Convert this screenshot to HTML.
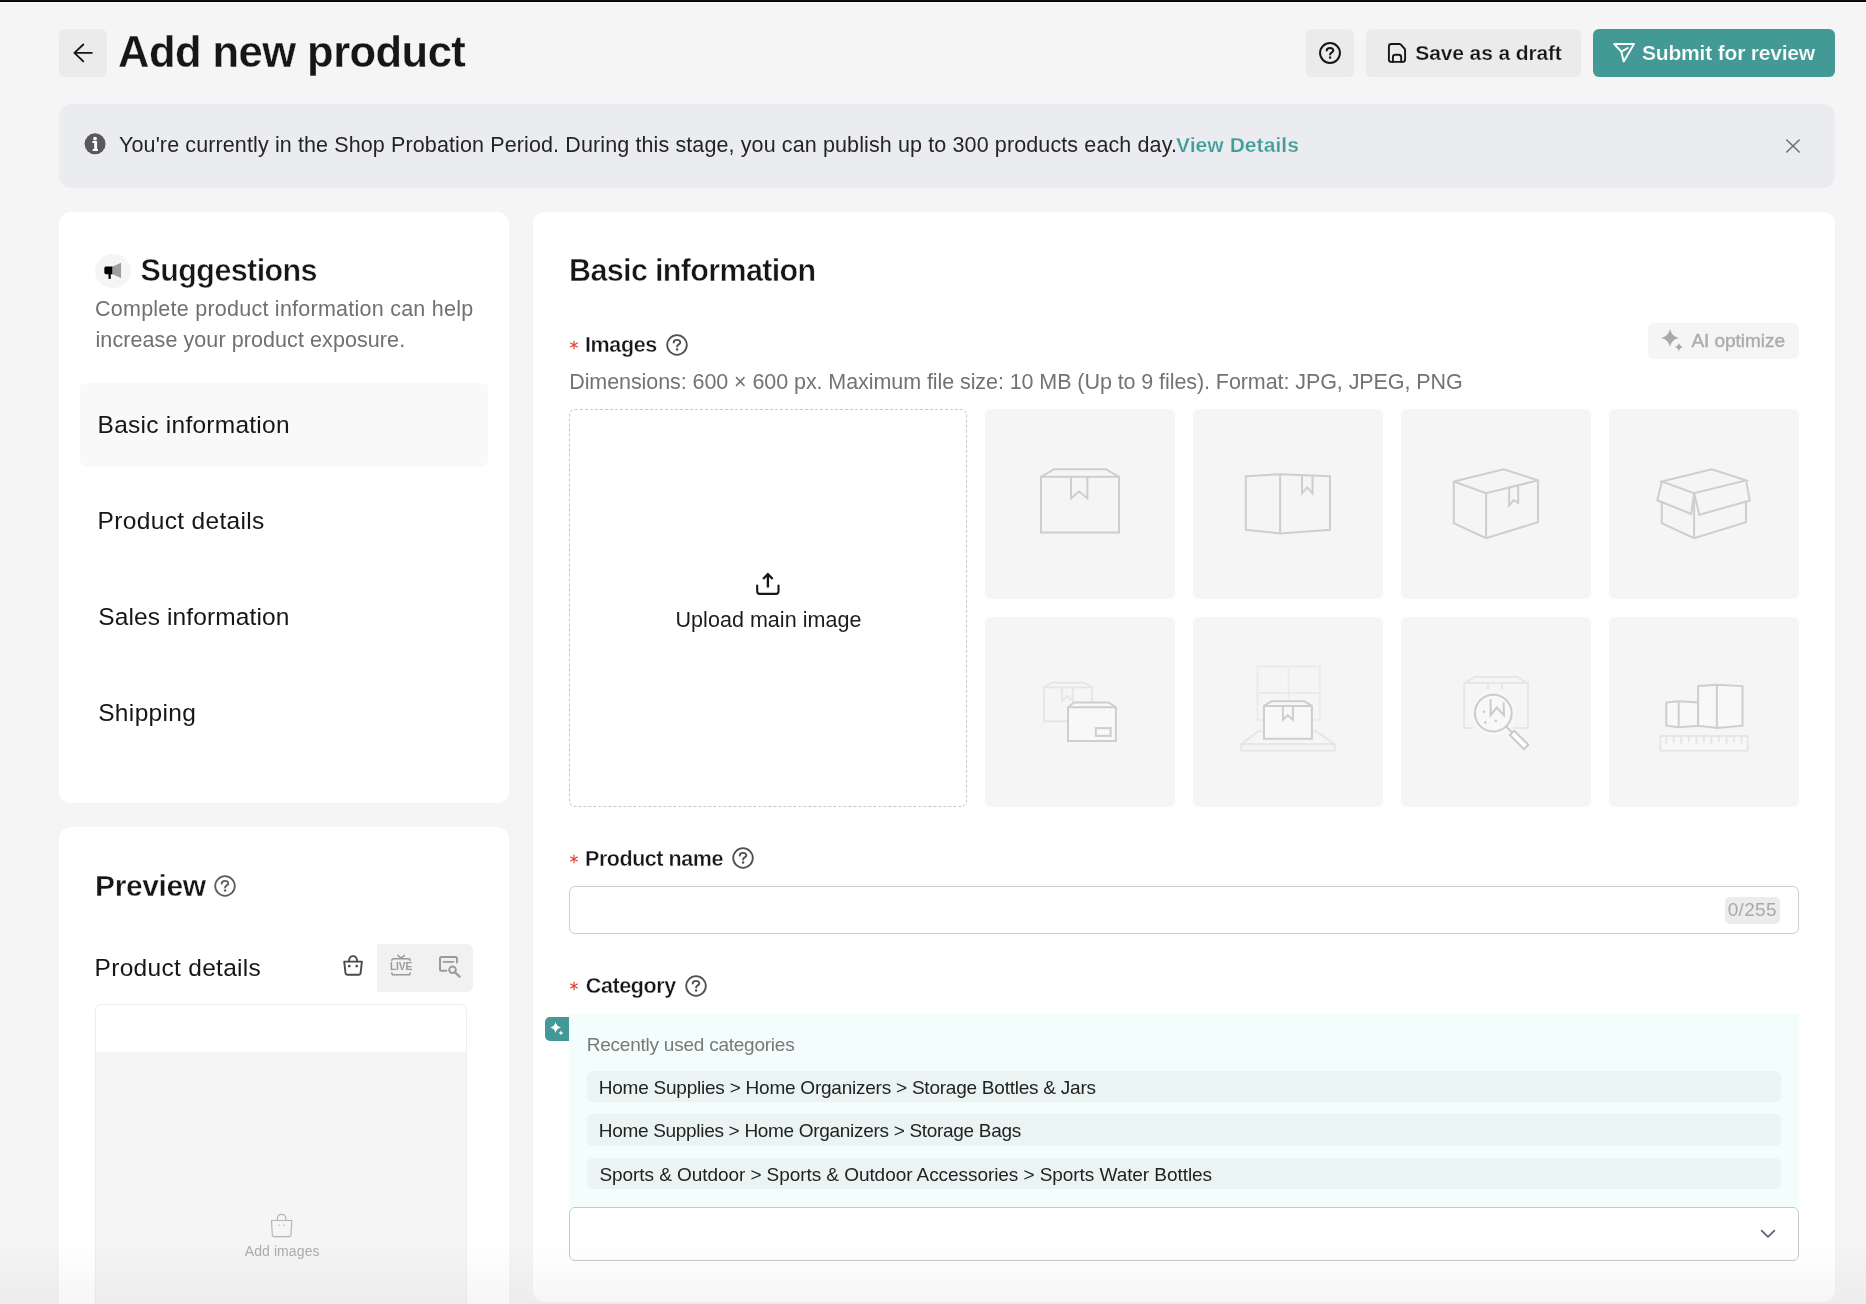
<!DOCTYPE html>
<html lang="en"><head><meta charset="utf-8"><title>Add new product</title>
<style>
html,body{margin:0;padding:0;width:1866px;height:1304px;overflow:hidden;}
body{width:1866px;height:1304px;overflow:hidden;background:#f5f5f5;position:relative;font-family:"Liberation Sans", sans-serif;}
.b{position:absolute;}
.t{position:absolute;white-space:nowrap;font-family:"Liberation Sans", sans-serif;}
.i{position:absolute;overflow:visible;}
#w{position:absolute;left:0;top:0;width:1866px;height:1304px;overflow:hidden;will-change:transform;}
</style></head><body><div id="w">
<div class="b" style="left:0px;top:0px;width:1866px;height:1px;background:#111;"></div>
<div class="b" style="left:0px;top:1px;width:1866px;height:1px;background:#000;"></div>
<div class="b" style="left:0px;top:2px;width:1866px;height:1px;background:#fdfdfd;"></div>
<div class="b" style="left:59px;top:29px;width:48px;height:48px;background:#ebebeb;border-radius:6px;"></div>
<div class="b" style="left:1306px;top:29px;width:48px;height:48px;background:#ebebeb;border-radius:6px;"></div>
<div class="b" style="left:1366px;top:29px;width:215px;height:48px;background:#ebebeb;border-radius:6px;"></div>
<div class="b" style="left:1593px;top:29px;width:242px;height:48px;background:#439996;border-radius:6px;"></div>
<div class="b" style="left:59px;top:104px;width:1776px;height:84px;background:#ebecf0;border-radius:12px;"></div>
<div class="b" style="left:59px;top:212px;width:450px;height:591px;background:#fff;border-radius:12px;"></div>
<div class="b" style="left:95px;top:254px;width:36px;height:34px;background:#f5f5f5;border-radius:50%;"></div>
<div class="b" style="left:80px;top:383px;width:408px;height:84px;background:#f9f9f9;border-radius:6px;"></div>
<div class="b" style="left:59px;top:827px;width:450px;height:503px;background:#fff;border-radius:12px;"></div>
<div class="b" style="left:377px;top:944px;width:96px;height:48px;background:#f1f1f1;border-radius:0 6px 6px 0;"></div>
<div class="b" style="left:95px;top:1004px;width:372px;height:326px;background:#f5f5f5;border:1px solid #eeeeee;border-radius:6px;box-sizing:border-box;"></div>
<div class="b" style="left:96px;top:1005px;width:370px;height:47px;background:#fff;border-radius:5px 5px 0 0;"></div>
<div class="b" style="left:533px;top:212px;width:1302px;height:1090px;background:#fff;border-radius:12px;"></div>
<div class="b" style="left:1648px;top:323px;width:151px;height:36px;background:#f5f5f5;border-radius:6px;"></div>
<div class="b" style="left:569px;top:409px;width:398px;height:398px;border:1px dashed #c9c9c9;border-radius:6px;box-sizing:border-box;"></div>
<div class="b" style="left:985px;top:409px;width:190px;height:190px;background:#f5f5f5;border-radius:6px;"></div>
<div class="b" style="left:1193px;top:409px;width:190px;height:190px;background:#f5f5f5;border-radius:6px;"></div>
<div class="b" style="left:1401px;top:409px;width:190px;height:190px;background:#f5f5f5;border-radius:6px;"></div>
<div class="b" style="left:1609px;top:409px;width:190px;height:190px;background:#f5f5f5;border-radius:6px;"></div>
<div class="b" style="left:985px;top:617px;width:190px;height:190px;background:#f5f5f5;border-radius:6px;"></div>
<div class="b" style="left:1193px;top:617px;width:190px;height:190px;background:#f5f5f5;border-radius:6px;"></div>
<div class="b" style="left:1401px;top:617px;width:190px;height:190px;background:#f5f5f5;border-radius:6px;"></div>
<div class="b" style="left:1609px;top:617px;width:190px;height:190px;background:#f5f5f5;border-radius:6px;"></div>
<div class="b" style="left:569px;top:886px;width:1230px;height:48px;border:1px solid #cfcfcf;border-radius:6px;box-sizing:border-box;background:#fff;"></div>
<div class="b" style="left:1725px;top:897px;width:55px;height:27px;background:#ececec;border-radius:5px;"></div>
<div class="b" style="left:569px;top:1014px;width:1230px;height:194px;background:#f3fdfc;"></div>
<div class="b" style="left:545px;top:1017px;width:24px;height:24px;background:#439996;border-radius:5px 0 0 5px;"></div>
<div class="b" style="left:587px;top:1071px;width:1194px;height:31px;background:#eaf4f3;border-radius:6px;"></div>
<div class="b" style="left:587px;top:1114px;width:1194px;height:32px;background:#eaf4f3;border-radius:6px;"></div>
<div class="b" style="left:587px;top:1158px;width:1194px;height:31px;background:#eaf4f3;border-radius:6px;"></div>
<div class="b" style="left:569px;top:1207px;width:1230px;height:54px;border:1px solid #c9c9c9;border-radius:6px;box-sizing:border-box;background:#fff;"></div>
<div class="t" style="left:118.0px;top:31px;font-size:43.5px;line-height:43.5px;font-weight:700;-webkit-text-stroke:0.3px #f5f5f5;color:#161616;letter-spacing:-0.529px;">Add new product</div>
<div class="t" style="left:1415.3px;top:42px;font-size:21px;line-height:21px;font-weight:700;-webkit-text-stroke:0.25px #ebebeb;color:#161616;letter-spacing:-0.121px;">Save as a draft</div>
<div class="t" style="left:1642.0px;top:42px;font-size:21px;line-height:21px;font-weight:700;-webkit-text-stroke:0.2px #439996;color:#ffffff;letter-spacing:-0.188px;">Submit for review</div>
<div class="t" style="left:119.0px;top:135px;font-size:21.5px;line-height:21.5px;font-weight:400;color:#242424;letter-spacing:0.117px;">You're currently in the Shop Probation Period. During this stage, you can publish up to 300 products each day.</div>
<div class="t" style="left:1176.0px;top:134px;font-size:21px;line-height:21px;font-weight:700;-webkit-text-stroke:0.25px #ebecf0;color:#3f9c98;letter-spacing:0.064px;">View Details</div>
<div class="t" style="left:140.6px;top:255px;font-size:30.5px;line-height:30.5px;font-weight:700;-webkit-text-stroke:0.5px #ffffff;color:#161616;letter-spacing:-0.610px;">Suggestions</div>
<div class="t" style="left:95.0px;top:299px;font-size:21.5px;line-height:21.5px;font-weight:400;color:#707070;letter-spacing:0.247px;">Complete product information can help</div>
<div class="t" style="left:95.5px;top:330px;font-size:21.5px;line-height:21.5px;font-weight:400;color:#707070;letter-spacing:0.083px;">increase your product exposure.</div>
<div class="t" style="left:97.6px;top:413px;font-size:24.5px;line-height:24.5px;font-weight:400;color:#161616;letter-spacing:0.250px;">Basic information</div>
<div class="t" style="left:97.6px;top:509px;font-size:24.5px;line-height:24.5px;font-weight:400;color:#161616;letter-spacing:0.336px;">Product details</div>
<div class="t" style="left:98.2px;top:605px;font-size:24.5px;line-height:24.5px;font-weight:400;color:#161616;letter-spacing:0.125px;">Sales information</div>
<div class="t" style="left:98.2px;top:701px;font-size:24.5px;line-height:24.5px;font-weight:400;color:#161616;letter-spacing:0.343px;">Shipping</div>
<div class="t" style="left:95.0px;top:871px;font-size:30px;line-height:30px;font-weight:700;-webkit-text-stroke:0.4px #ffffff;color:#161616;letter-spacing:-0.367px;">Preview</div>
<div class="t" style="left:94.6px;top:956px;font-size:24.5px;line-height:24.5px;font-weight:400;color:#161616;letter-spacing:0.300px;">Product details</div>
<div class="t" style="left:244.7px;top:1244px;font-size:14px;line-height:14px;font-weight:400;color:#acacac;letter-spacing:0.100px;">Add images</div>
<div class="t" style="left:569.1px;top:255px;font-size:30.5px;line-height:30.5px;font-weight:700;-webkit-text-stroke:0.5px #ffffff;color:#161616;letter-spacing:-0.656px;">Basic information</div>
<div class="t" style="left:585.0px;top:335px;font-size:21.5px;line-height:21.5px;font-weight:700;-webkit-text-stroke:0.35px #ffffff;color:#161616;letter-spacing:-0.360px;">Images</div>
<div class="t" style="left:569.2px;top:372px;font-size:21.5px;line-height:21.5px;font-weight:400;color:#737373;letter-spacing:-0.076px;">Dimensions: 600 × 600 px. Maximum file size: 10 MB (Up to 9 files). Format: JPG, JPEG, PNG</div>
<div class="t" style="left:1691.4px;top:331px;font-size:19px;line-height:19px;font-weight:400;-webkit-text-stroke:0.46px currentColor;color:#acadaf;letter-spacing:-0.040px;">AI optimize</div>
<div class="t" style="left:675.5px;top:610px;font-size:21.5px;line-height:21.5px;font-weight:400;color:#1c1c1c;letter-spacing:0.044px;">Upload main image</div>
<div class="t" style="left:585.0px;top:849px;font-size:21.5px;line-height:21.5px;font-weight:700;-webkit-text-stroke:0.35px #ffffff;color:#161616;letter-spacing:-0.455px;">Product name</div>
<div class="t" style="left:1727.7px;top:900px;font-size:19px;line-height:19px;font-weight:400;color:#a9a9a9;letter-spacing:0.325px;">0/255</div>
<div class="t" style="left:585.8px;top:976px;font-size:21.5px;line-height:21.5px;font-weight:700;-webkit-text-stroke:0.35px #ffffff;color:#161616;letter-spacing:-0.400px;">Category</div>
<div class="t" style="left:586.8px;top:1035px;font-size:19px;line-height:19px;font-weight:400;color:#787878;letter-spacing:-0.239px;">Recently used categories</div>
<div class="t" style="left:598.8px;top:1078px;font-size:19px;line-height:19px;font-weight:400;color:#222222;letter-spacing:-0.233px;">Home Supplies &gt; Home Organizers &gt; Storage Bottles &amp; Jars</div>
<div class="t" style="left:598.8px;top:1121px;font-size:19px;line-height:19px;font-weight:400;color:#222222;letter-spacing:-0.307px;">Home Supplies &gt; Home Organizers &gt; Storage Bags</div>
<div class="t" style="left:599.4px;top:1165px;font-size:19px;line-height:19px;font-weight:400;color:#222222;letter-spacing:-0.064px;">Sports &amp; Outdoor &gt; Sports &amp; Outdoor Accessories &gt; Sports Water Bottles</div>
<svg class="i" style="left:59px;top:29px" width="48" height="48" viewBox="0 0 48 48" fill="none" ><path d="M32.8,23.9 H15.5 M24.3,15.5 L15.4,23.9 L24.3,32.4" stroke="#161616" stroke-width="1.9" stroke-linecap="round" stroke-linejoin="round"/></svg>
<svg class="i" style="left:1314.9px;top:37.9px" width="30" height="30" viewBox="0 0 30 30" fill="none" ><g transform="translate(15 15)" stroke="#161616" stroke-width="1.95" fill="none" stroke-linecap="round"><circle cx="0" cy="0" r="9.95"/><path d="M-3.3,-2.5 C-3.3,-4.3 -1.8,-5.1 0,-5.1 C1.9,-5.1 3.3,-4.1 3.3,-2.6 C3.3,-0.7 0.1,-0.5 0.1,1.5" stroke-width="2.05"/><circle cx="0.1" cy="4.5" r="1.2" fill="#161616" stroke="none"/></g></svg>
<svg class="i" style="left:1376px;top:35px" width="40" height="36" viewBox="0 0 40 36" fill="none" ><g stroke="#161616" stroke-width="1.9" stroke-linejoin="round" stroke-linecap="round"><path d="M15.4,9 H23.2 Q24.2,9 24.9,9.7 L28.4,13.5 Q29.1,14.2 29.1,15.2 V24.4 Q29.1,26.9 26.6,26.9 H15.4 Q12.9,26.9 12.9,24.4 V11.5 Q12.9,9 15.4,9 Z"/><path d="M16.9,26.9 V22.3 Q16.9,19.8 19.4,19.8 H22.7 Q25.2,19.8 25.2,22.3 V26.9"/></g></svg>
<svg class="i" style="left:1604px;top:35px" width="40" height="36" viewBox="0 0 40 36" fill="none" ><g stroke="#fff" stroke-width="1.9" stroke-linejoin="round" stroke-linecap="round"><path d="M10.2,9 H30 L19.75,26.5 L17.3,16.7 Z"/><path d="M17.3,16.7 L23.8,13"/></g></svg>
<svg class="i" style="left:80px;top:129px" width="30" height="30" viewBox="0 0 30 30" fill="none" ><circle cx="15.05" cy="14.8" r="10.5" fill="#595959"/><circle cx="15" cy="9.6" r="1.9" fill="#fff"/><path d="M12.4,12 H17.1 V19.9 H17.9 V22 H12.6 V19.9 H14.2 V14.1 H12.4 Z" fill="#fff"/></svg>
<svg class="i" style="left:1775px;top:128px" width="36" height="36" viewBox="0 0 36 36" fill="none" ><path d="M11.8,12 L24.2,24 M24.2,12 L11.8,24" stroke="#6f7177" stroke-width="1.6" stroke-linecap="round"/></svg>
<svg class="i" style="left:93px;top:251px" width="40" height="40" viewBox="0 0 40 40" fill="none" ><path d="M12.9,15.6 H19.6 V23.2 H12.9 Q11.35,23.2 11.35,21.6 V17.2 Q11.35,15.6 12.9,15.6 Z" fill="#000"/><rect x="15.5" y="23" width="2.3" height="4.9" fill="#000"/><path d="M19.6,15.6 L28.07,11.8 V27.1 L19.6,23.2 Z" fill="#9e9e9e"/></svg>
<svg class="i" style="left:210.1px;top:871.0px" width="30" height="30" viewBox="0 0 30 30" fill="none" ><g transform="translate(15 15)" stroke="#5e5e5e" stroke-width="1.8" fill="none" stroke-linecap="round"><circle cx="0" cy="0" r="9.8"/><path d="M-3.3,-2.5 C-3.3,-4.3 -1.8,-5.1 0,-5.1 C1.9,-5.1 3.3,-4.1 3.3,-2.6 C3.3,-0.7 0.1,-0.5 0.1,1.5" stroke-width="1.9000000000000001"/><circle cx="0.1" cy="4.5" r="1.2" fill="#5e5e5e" stroke="none"/></g></svg>
<svg class="i" style="left:661.8px;top:330px" width="30" height="30" viewBox="0 0 30 30" fill="none" ><g transform="translate(15 15)" stroke="#505050" stroke-width="1.8" fill="none" stroke-linecap="round"><circle cx="0" cy="0" r="9.8"/><path d="M-3.3,-2.5 C-3.3,-4.3 -1.8,-5.1 0,-5.1 C1.9,-5.1 3.3,-4.1 3.3,-2.6 C3.3,-0.7 0.1,-0.5 0.1,1.5" stroke-width="1.9000000000000001"/><circle cx="0.1" cy="4.5" r="1.2" fill="#505050" stroke="none"/></g></svg>
<svg class="i" style="left:727.9px;top:843px" width="30" height="30" viewBox="0 0 30 30" fill="none" ><g transform="translate(15 15)" stroke="#505050" stroke-width="1.8" fill="none" stroke-linecap="round"><circle cx="0" cy="0" r="9.8"/><path d="M-3.3,-2.5 C-3.3,-4.3 -1.8,-5.1 0,-5.1 C1.9,-5.1 3.3,-4.1 3.3,-2.6 C3.3,-0.7 0.1,-0.5 0.1,1.5" stroke-width="1.9000000000000001"/><circle cx="0.1" cy="4.5" r="1.2" fill="#505050" stroke="none"/></g></svg>
<svg class="i" style="left:681px;top:970.9px" width="30" height="30" viewBox="0 0 30 30" fill="none" ><g transform="translate(15 15)" stroke="#505050" stroke-width="1.8" fill="none" stroke-linecap="round"><circle cx="0" cy="0" r="9.8"/><path d="M-3.3,-2.5 C-3.3,-4.3 -1.8,-5.1 0,-5.1 C1.9,-5.1 3.3,-4.1 3.3,-2.6 C3.3,-0.7 0.1,-0.5 0.1,1.5" stroke-width="1.9000000000000001"/><circle cx="0.1" cy="4.5" r="1.2" fill="#505050" stroke="none"/></g></svg>
<svg class="i" style="left:329px;top:944px" width="48" height="48" viewBox="0 0 48 48" fill="none" ><g stroke="#4a4a4a" stroke-width="1.9" stroke-linejoin="round" stroke-linecap="round"><path d="M15.2,17.6 H32.9 L31.6,29.2 Q31.4,30.7 29.9,30.7 H18.2 Q16.7,30.7 16.5,29.2 Z"/><path d="M20.1,17.4 V16 A4,4.6 0 0 1 28,16 V17.4"/></g><circle cx="20.3" cy="22.1" r="1.35" fill="#4a4a4a"/><circle cx="27.7" cy="22.1" r="1.35" fill="#4a4a4a"/></svg>
<svg class="i" style="left:377px;top:944px" width="48" height="48" viewBox="0 0 48 48" fill="none" ><g stroke="#9a9a9a" stroke-width="1.5" stroke-linecap="round" stroke-linejoin="round"><path d="M20.9,11.4 L24.1,14.3 L27.4,11.4"/><path d="M14.8,16.6 Q14.8,14.8 16.6,14.8 H31.4 Q33.2,14.8 33.2,16.6"/><path d="M14.8,29 Q14.8,30.8 16.6,30.8 H31.4 Q33.2,30.8 33.2,29"/></g><text x="24.1" y="25.9" text-anchor="middle" font-family="Liberation Sans, sans-serif" font-weight="700" font-size="10.2" letter-spacing="-0.1" fill="#9a9a9a">LIVE</text></svg>
<svg class="i" style="left:425px;top:944px" width="48" height="48" viewBox="0 0 48 48" fill="none" ><g stroke="#9a9a9a" stroke-width="2" stroke-linecap="round" stroke-linejoin="round"><path d="M21.3,26.8 H16.5 Q15,26.8 15,25.3 V14.6 Q15,13.1 16.5,13.1 H30.4 Q31.9,13.1 31.9,14.6 V18.5"/><path d="M18.6,17.9 H28.3" stroke-width="1.8"/><circle cx="27.5" cy="25.8" r="3.3"/><path d="M30,28.4 L34.7,32.6" stroke-width="2.2"/></g></svg>
<svg class="i" style="left:266px;top:1209px" width="30" height="32" viewBox="0 0 30 32" fill="none" ><g stroke="#b4b4b4" stroke-width="1.15" stroke-linejoin="round" stroke-linecap="round"><path d="M5.5,11.5 H25.8 L25,26 Q24.9,27.6 23.3,27.6 H8 Q6.4,27.6 6.3,26 Z"/><path d="M11.4,11.4 V9.5 A4.2,4.2 0 0 1 19.8,9.5 V11.4"/></g><circle cx="13.1" cy="16.2" r="0.75" fill="#b4b4b4"/><circle cx="18.2" cy="16.2" r="0.75" fill="#b4b4b4"/></svg>
<svg class="i" style="left:748px;top:564px" width="40" height="40" viewBox="0 0 40 40" fill="none" ><g stroke="#161616" stroke-width="2.1" stroke-linecap="round" stroke-linejoin="round"><path d="M9.2,21.6 V27.3 Q9.2,29.9 11.8,29.9 H27.9 Q30.5,29.9 30.5,27.3 V21.6"/><path d="M19.9,23.4 V10.6 M15.1,15 L19.9,10.2 L24.7,15" stroke-width="2.35" stroke-linecap="butt" stroke-linejoin="miter"/></g></svg>
<svg class="i" style="left:1654px;top:322px" width="40" height="38" viewBox="0 0 40 38" fill="none" ><path fill="#a8a9ab" d="M16,7.1 Q17.513,14.487 24.9,16 Q17.513,17.513 16,24.9 Q14.487,17.513 7.1,16 Q14.487,14.487 16,7.1Z"/><path fill="#a8a9ab" d="M24.9,20.8 Q25.631,24.369 29.2,25.1 Q25.631,25.831000000000003 24.9,29.400000000000002 Q24.168999999999997,25.831000000000003 20.599999999999998,25.1 Q24.168999999999997,24.369 24.9,20.8Z"/></svg>
<svg class="i" style="left:541px;top:1013px" width="32" height="32" viewBox="0 0 32 32" fill="none" ><path fill="#fff" d="M14.6,9.1 Q15.518,13.582 20.0,14.5 Q15.518,15.418 14.6,19.9 Q13.681999999999999,15.418 9.2,14.5 Q13.681999999999999,13.582 14.6,9.1Z"/><path fill="#fff" d="M19.9,17.5 Q20.308,19.491999999999997 22.299999999999997,19.9 Q20.308,20.308 19.9,22.299999999999997 Q19.491999999999997,20.308 17.5,19.9 Q19.491999999999997,19.491999999999997 19.9,17.5Z"/></svg>
<svg class="i" style="left:1754px;top:1222px" width="28" height="24" viewBox="0 0 28 24" fill="none" ><path d="M7.6,8.6 L14,14.9 L20.4,8.6" stroke="#555b78" stroke-width="1.6" stroke-linecap="round" stroke-linejoin="round"/></svg>
<svg class="i" style="left:564.1px;top:334.5px" width="20" height="20" viewBox="0 0 20 20" fill="none" ><path d="M10.00,5.65 L10.00,14.35 M6.23,7.83 L13.77,12.17 M13.77,7.83 L6.23,12.17 " stroke="#e2463b" stroke-width="1.25"/></svg>
<svg class="i" style="left:564.1px;top:848.6px" width="20" height="20" viewBox="0 0 20 20" fill="none" ><path d="M10.00,5.65 L10.00,14.35 M6.23,7.83 L13.77,12.17 M13.77,7.83 L6.23,12.17 " stroke="#e2463b" stroke-width="1.25"/></svg>
<svg class="i" style="left:564.1px;top:976.0px" width="20" height="20" viewBox="0 0 20 20" fill="none" ><path d="M10.00,5.65 L10.00,14.35 M6.23,7.83 L13.77,12.17 M13.77,7.83 L6.23,12.17 " stroke="#e2463b" stroke-width="1.25"/></svg>
<svg class="i" style="left:985px;top:409px" width="190" height="190" viewBox="0 0 190 190" fill="none" ><g stroke="#cecece" stroke-width="2" stroke-linejoin="miter" fill="none"><rect x="56" y="67.8" width="78" height="55.7"/><path d="M56,67.8 L69.1,60.2 H121 L134,67.8"/><path d="M86,67.8 V89.3 L94.2,82.6 L102.4,89.3 V67.8"/></g></svg>
<svg class="i" style="left:1193px;top:409px" width="190" height="190" viewBox="0 0 190 190" fill="none" ><g stroke="#cecece" stroke-width="2" stroke-linejoin="miter" fill="none"><path d="M52.8,67.2 L87.1,65.3 L137,67.2 V120.8 L87.1,124.4 L52.8,120.8 Z"/><path d="M87.1,65.3 V124.4"/><path d="M109,66.2 V84.3 L114.2,78.4 L119.5,84.3 V66.6"/></g></svg>
<svg class="i" style="left:1401px;top:409px" width="190" height="190" viewBox="0 0 190 190" fill="none" ><g stroke="#cecece" stroke-width="2" stroke-linejoin="miter" fill="none"><path d="M52.8,72.5 L102.8,60.2 L137,71.4 V113.2 L85.1,129.2 L52.8,114.2 Z"/><path d="M52.8,72.5 L85.1,84.3 L137,71.4 M85.1,84.3 V129.2"/><path d="M108.2,78.5 V96.5 L112.7,91 L117.2,94 V76.3"/></g></svg>
<svg class="i" style="left:1609px;top:409px" width="190" height="190" viewBox="0 0 190 190" fill="none" ><g stroke="#cecece" stroke-width="2" stroke-linejoin="miter" fill="none"><path d="M52.8,72.5 L102.8,60.2 L137,71.4 L85.1,84.3 Z"/><path d="M52.8,72.5 L48.3,91.3 L82.2,105 L85.1,84.3 L90.4,105.8 L140.8,91.5 L137,71.4"/><path d="M52.8,93.1 V114.2 L85.1,129.2 L137,113.2 V92.6 M85.1,84.3 V129.2"/></g></svg>
<svg class="i" style="left:985px;top:617px" width="190" height="190" viewBox="0 0 190 190" fill="none" ><g stroke-width="2" stroke-linejoin="miter" fill="none"><g stroke="#e6e6e6"><rect x="59" y="70.4" width="48" height="33.9"/><path d="M59,70.4 L66.6,65.7 H99 L107,70.4"/><path d="M77.1,70.4 V83.9 L82.3,79.2 L87.7,83.9 V70.4"/></g><g stroke="#cecece"><path d="M83,90.2 L88.9,85.5 H123.5 L130.9,90.2 V123.9 H83 Z" fill="#f8f8f8"/><path d="M83,90.2 H130.9"/><rect x="110.9" y="111.1" width="14.7" height="7.8"/></g></g></svg>
<svg class="i" style="left:1193px;top:617px" width="190" height="190" viewBox="0 0 190 190" fill="none" ><g stroke-width="2" stroke-linejoin="miter" fill="none"><g stroke="#ebebeb"><rect x="64.5" y="49.4" width="62.4" height="53.4"/><path d="M95.7,49.4 V102.8 M64.5,76.1 H126.9"/></g><g stroke="#e6e6e6"><path d="M65.3,114.2 H123.5 L141.6,127.3 H48.4 Z"/><rect x="48.4" y="127.3" width="93.2" height="6.3"/></g><g stroke="#cecece"><path d="M71,88.9 L78.4,84.3 H111.3 L118.9,88.9 V121.8 H71 Z" fill="#f8f8f8"/><path d="M71,88.9 H118.9"/><path d="M89.9,88.9 V102.8 L94.8,98.2 L99.9,102.8 V88.9"/></g></g></svg>
<svg class="i" style="left:1401px;top:617px" width="190" height="190" viewBox="0 0 190 190" fill="none" ><g stroke-width="2" stroke-linejoin="miter" fill="none"><g stroke="#e6e6e6"><path d="M71.6,110.9 H63.2 V66.1 H126.9 V110.9 H112.5"/><path d="M63.2,66.1 L73.7,60.1 H116.3 L126.9,66.1"/><path d="M87.2,66.1 V72.5 M100.9,66.1 V72.5"/></g><circle cx="92.3" cy="96.1" r="22.5" fill="#f7f7f7" stroke="none"/><g stroke="#cbcbcb"><circle cx="92.3" cy="96.1" r="18.4" fill="#f8f8f8"/><path d="M89.6,82.2 V98.2 L95.7,90.6 L103,98.2 L102.6,85.5" stroke-linejoin="miter"/><path d="M105.4,109.6 L112,116.5"/><path d="M113.2,113.7 L127.3,127.8 L123,132.2 L108.9,118 Z" fill="#fff" stroke-linejoin="round"/></g><g fill="#cbcbcb" stroke="none"><circle cx="82.9" cy="94.8" r="1.3"/><circle cx="84.3" cy="105.4" r="1.3"/><circle cx="94.8" cy="103.9" r="1.3"/></g></g></svg>
<svg class="i" style="left:1609px;top:617px" width="190" height="190" viewBox="0 0 190 190" fill="none" ><g stroke-width="2" stroke-linejoin="miter" fill="none"><g stroke="#e6e6e6"><rect x="51.4" y="119.1" width="87.3" height="14.7" rx="1" fill="#f7f7f7"/><path d="M57.3,119.1 V126.9 M64.8,119.1 V125.2 M72.3,119.1 V126.9 M79.9,119.1 V125.2 M87.4,119.1 V126.9 M94.9,119.1 V125.2 M102.4,119.1 V126.9 M109.9,119.1 V125.2 M117.5,119.1 V126.9 M125.0,119.1 V125.2 M132.5,119.1 V126.9 "/></g><g stroke="#cecece"><path d="M57.3,85.4 L69.7,84.3 L89.1,85.4 V108.7 L69.7,110.2 L57.3,108.7 Z" fill="#f8f8f8"/><path d="M69.7,84.3 V110.2"/><path d="M89.1,69.1 L107.9,67.8 L133.5,69.1 V108.7 L107.9,111 L89.1,108.7 Z" fill="#f8f8f8"/><path d="M107.9,67.8 V111"/></g></g></svg>
<div class="b" style="left:0px;top:1240px;width:1866px;height:64px;background:linear-gradient(to bottom,rgba(0,0,0,0),rgba(0,0,0,0.036));"></div>
</div></body></html>
